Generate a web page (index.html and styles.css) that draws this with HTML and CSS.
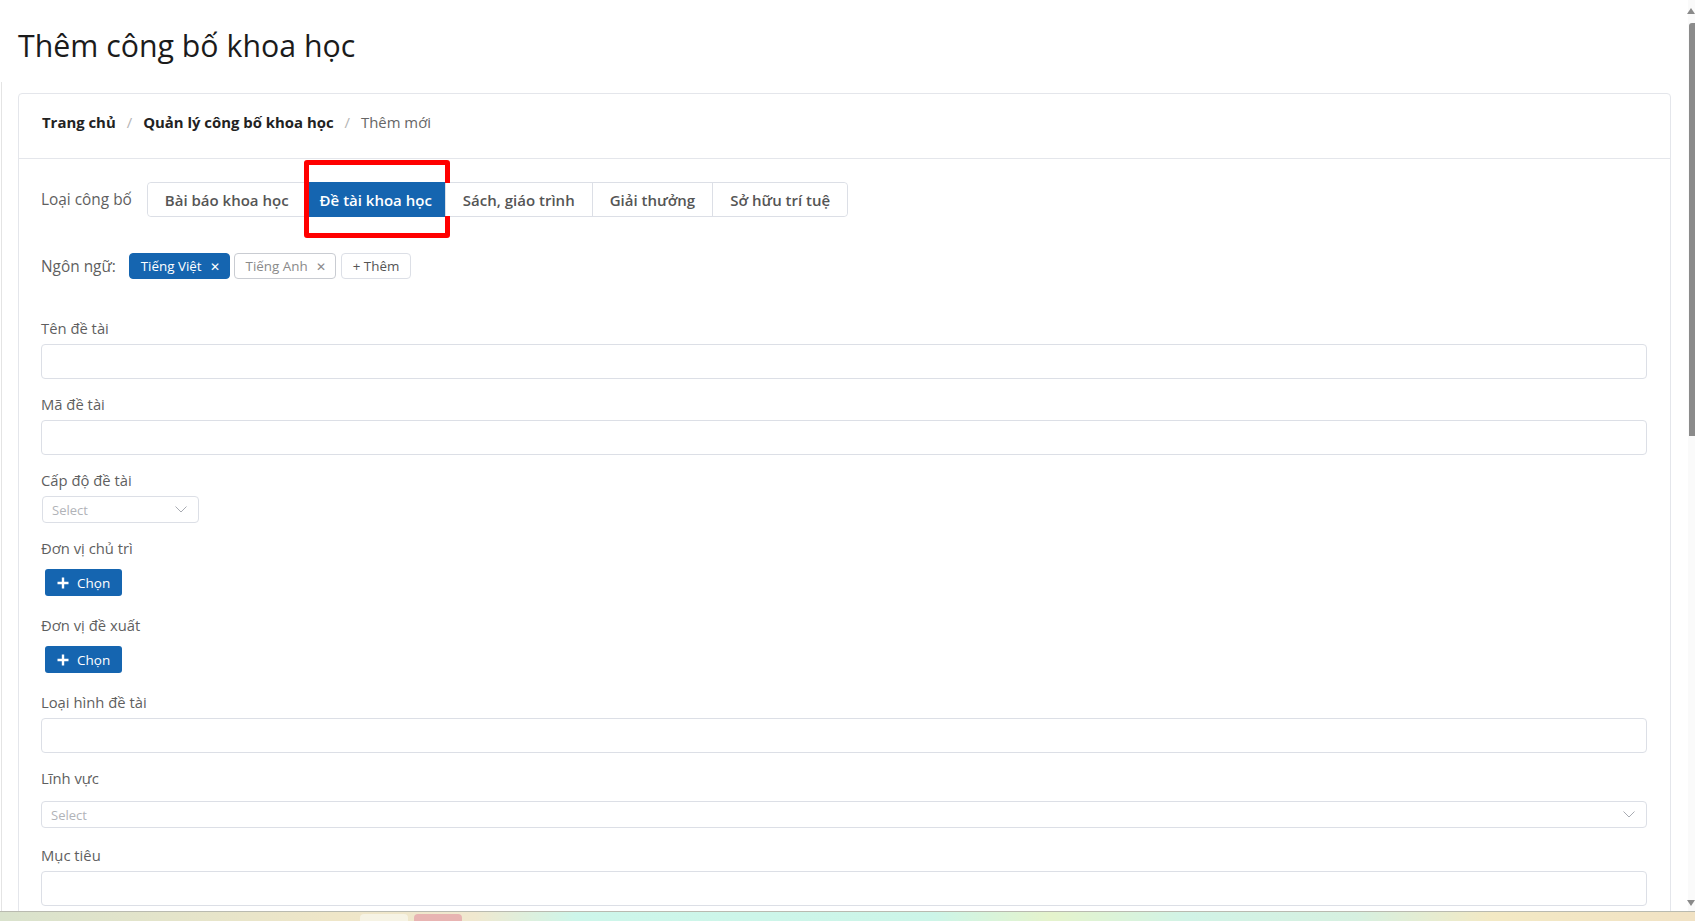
FILE: index.html
```html
<!DOCTYPE html>
<html lang="vi">
<head>
    <meta charset="UTF-8">
    <meta name="viewport" content="width=device-width, initial-scale=1.0">
    <title>Thêm công bố khoa học</title>
    <link rel="stylesheet" href="styles.css">
</head>
<body>
    <h1 class="page-title">Thêm công bố khoa học</h1>

    <main class="content">
        <div class="card">
            <div class="card-header">
                <nav class="breadcrumb">
                    <a href="#">Trang chủ</a>
                    <span class="sep">/</span>
                    <a href="#">Quản lý công bố khoa học</a>
                    <span class="sep">/</span>
                    <span class="current">Thêm mới</span>
                </nav>
            </div>

            <div class="card-body">
                <div class="type-row">
                    <span class="row-label">Loại công bố</span>
                    <div class="segmented">
                        <button class="segment">Bài báo khoa học</button>
                        <button class="segment active">Đề tài khoa học<span class="highlight"></span></button>
                        <button class="segment">Sách, giáo trình</button>
                        <button class="segment">Giải thưởng</button>
                        <button class="segment">Sở hữu trí tuệ</button>
                    </div>
                </div>

                <div class="lang-row">
                    <span class="row-label lang-label">Ngôn ngữ:</span>
                    <span class="tag tag-active">Tiếng Việt <span class="tag-close">✕</span></span>
                    <span class="tag">Tiếng Anh <span class="tag-close">✕</span></span>
                    <span class="tag tag-add">+ Thêm</span>
                </div>

                <div class="field first">
                    <label class="field-label">Tên đề tài</label>
                    <input class="input" type="text">
                </div>

                <div class="field">
                    <label class="field-label">Mã đề tài</label>
                    <input class="input" type="text">
                </div>

                <div class="field">
                    <label class="field-label">Cấp độ đề tài</label>
                    <div class="select select-small">
                        <span>Select</span>
                        <svg class="chevron" width="12" height="7" viewBox="0 0 12 7"><polyline points="0.5,0.5 6,6 11.5,0.5" fill="none" stroke="#a8abb2" stroke-width="1"/></svg>
                    </div>
                </div>

                <div class="field field-action">
                    <label class="field-label">Đơn vị chủ trì</label>
                    <button class="btn-choose">
                        <svg width="12" height="12" viewBox="0 0 12 12"><path d="M6 0.5v11M0.5 6h11" stroke="#fff" stroke-width="2.4"/></svg>
                        Chọn
                    </button>
                </div>

                <div class="field field-action">
                    <label class="field-label">Đơn vị đề xuất</label>
                    <button class="btn-choose">
                        <svg width="12" height="12" viewBox="0 0 12 12"><path d="M6 0.5v11M0.5 6h11" stroke="#fff" stroke-width="2.4"/></svg>
                        Chọn
                    </button>
                </div>

                <div class="field">
                    <label class="field-label">Loại hình đề tài</label>
                    <input class="input" type="text">
                </div>

                <div class="field field-wide-select">
                    <label class="field-label">Lĩnh vực</label>
                    <div class="select select-wide">
                        <span>Select</span>
                        <svg class="chevron" width="12" height="7" viewBox="0 0 12 7"><polyline points="0.5,0.5 6,6 11.5,0.5" fill="none" stroke="#a8abb2" stroke-width="1"/></svg>
                    </div>
                </div>

                <div class="field">
                    <label class="field-label">Mục tiêu</label>
                    <input class="input" type="text">
                </div>
            </div>
        </div>
    </main>

    <div class="scrollbar">
        <span class="scroll-up"></span>
        <span class="scroll-thumb"></span>
        <span class="scroll-down"></span>
    </div>

    <div class="taskbar">
        <span class="task-icon task-light"></span>
        <span class="task-icon task-red"></span>
    </div>
</body>
</html>
```

FILE: styles.css
```css
html,
body {
    height: 100%;
}

body {
    margin: 0;
    font-family: "Open Sans", "Noto Sans", sans-serif;
    color: #333;
    background: #fff;
    overflow: hidden;
}

.page-title {
    margin: 0;
    padding: 25px 0 15px 18px;
    font-size: 30.3px;
    font-weight: 400;
    line-height: 42px;
    color: #1b1b1b;
}

.content {
    margin-left: 1px;
    border-left: 1px solid #e4e4e4;
    padding: 11px 24px 0 16px;
    height: 100%;
}

.card {
    border: 1px solid #e4e6eb;
    border-radius: 4px;
    height: 100%;
}

.card-header {
    padding: 17px 23px 25px;
    border-bottom: 1px solid #e4e6eb;
}

.breadcrumb {
    display: flex;
    align-items: center;
    font-size: 14.9px;
    line-height: 22px;
}

.breadcrumb a {
    color: #222;
    font-weight: 700;
    text-decoration: none;
}

.breadcrumb .sep {
    color: #b4b4b4;
    margin: 0 11px;
}

.breadcrumb .current {
    color: #666;
}

.card-body {
    padding: 23px 23px 40px 22px;
}

.row-label {
    color: #5f5f5f;
    font-size: 15.4px;
    margin-right: 15px;
}

.type-row {
    display: flex;
    align-items: center;
}

.segmented {
    display: flex;
    border: 1px solid #dcdfe6;
    border-radius: 4px;
    height: 33px;
}

.segment {
    position: relative;
    border: none;
    border-left: 1px solid #dcdfe6;
    background: #fff;
    padding: 0 17px;
    font-family: inherit;
    font-size: 15px;
    font-weight: 600;
    color: #555;
    cursor: pointer;
}

.segment:first-child {
    border-left: none;
    border-radius: 4px 0 0 4px;
}

.segment:last-child {
    border-radius: 0 4px 4px 0;
}

.segment.active {
    background: #1565b0;
    color: #fff;
    border-left-color: #1565b0;
    margin: -1px 0;
    padding: 0 13px;
}

.highlight {
    position: absolute;
    left: -3px;
    right: -5px;
    top: -22px;
    bottom: -21px;
    border: 5px solid #ff0000;
    border-radius: 3px;
}

.lang-row {
    display: flex;
    align-items: center;
    margin-top: 36px;
}

.lang-label {
    margin-right: 13px;
}

.tag {
    display: inline-flex;
    align-items: center;
    height: 24px;
    padding: 0 9px 0 11px;
    margin-right: 4px;
    border: 1px solid #c9ccd2;
    border-radius: 4px;
    font-size: 13.4px;
    color: #8a8a8a;
}

.tag-close {
    font-size: 12px;
    margin-left: 8px;
    color: #8a8a8a;
}

.tag-active {
    background: #1565b0;
    border-color: #1565b0;
    color: #fff;
}

.tag-active .tag-close {
    color: #fff;
}

.tag-add {
    margin-left: 1px;
    border-color: #dcdfe6;
    color: #555;
    padding: 0 11px;
}

.field {
    margin-bottom: 14px;
}

.field.first {
    margin-top: 38px;
}

.field-label {
    display: block;
    font-size: 14.8px;
    line-height: 22px;
    color: #5f5f5f;
    margin-bottom: 5px;
}

.input {
    display: block;
    width: 100%;
    height: 35px;
    box-sizing: border-box;
    border: 1px solid #dcdfe6;
    border-radius: 4px;
    font-family: inherit;
}

.select {
    display: flex;
    align-items: center;
    justify-content: space-between;
    height: 27px;
    box-sizing: border-box;
    border: 1px solid #dcdfe6;
    border-radius: 4px;
    padding: 0 11px 0 9px;
    font-size: 13px;
    color: #b1b3b8;
}

.select-small {
    width: 157px;
    margin-left: 1px;
}

.select-wide {
    margin-top: 12px;
}

.field-wide-select {
    margin-bottom: 16px;
}

.field-action {
    margin-bottom: 18px;
}

.field-action .field-label {
    margin-bottom: 10px;
}

.btn-choose {
    display: flex;
    align-items: center;
    gap: 8px;
    height: 27px;
    width: 77px;
    margin-left: 4px;
    padding: 0 0 0 12px;
    border: none;
    border-radius: 3px;
    background: #1565b0;
    color: #fff;
    font-family: inherit;
    font-size: 13.5px;
    cursor: pointer;
}

.scrollbar {
    position: fixed;
    top: 0;
    right: 0;
    width: 7px;
    height: 911px;
    background: #fafafa;
}

.scroll-up,
.scroll-down {
    position: absolute;
    right: 0;
    width: 0;
    height: 0;
    border-left: 4px solid transparent;
    border-right: 4px solid transparent;
}

.scroll-up {
    top: 8px;
    border-bottom: 6px solid #8a8a8a;
}

.scroll-down {
    bottom: 5px;
    border-top: 6px solid #8a8a8a;
}

.scroll-thumb {
    position: absolute;
    top: 23px;
    right: 0;
    width: 6px;
    height: 413px;
    background: #8b8b8b;
    border-radius: 3px 0 0 0;
}

.taskbar {
    position: fixed;
    left: 0;
    right: 0;
    bottom: 0;
    height: 9px;
    border-top: 1px solid #b9bab0;
    background: linear-gradient(90deg, #d9e2cc 0%, #efe6c8 20%, #f0e8cf 28%, #cdf6ea 34%, #ccf5e8 55%, #e5f3cc 62%, #d1f3e6 70%, #d6f0e0 80%, #f3e9c4 88%, #f1e2c4 100%);
}

.task-icon {
    position: absolute;
    top: 2px;
    height: 8px;
    border-radius: 4px 4px 0 0;
}

.task-light {
    left: 360px;
    width: 48px;
    background: #f6f3e4;
}

.task-red {
    left: 414px;
    width: 48px;
    background: #e8b4b2;
}
```
